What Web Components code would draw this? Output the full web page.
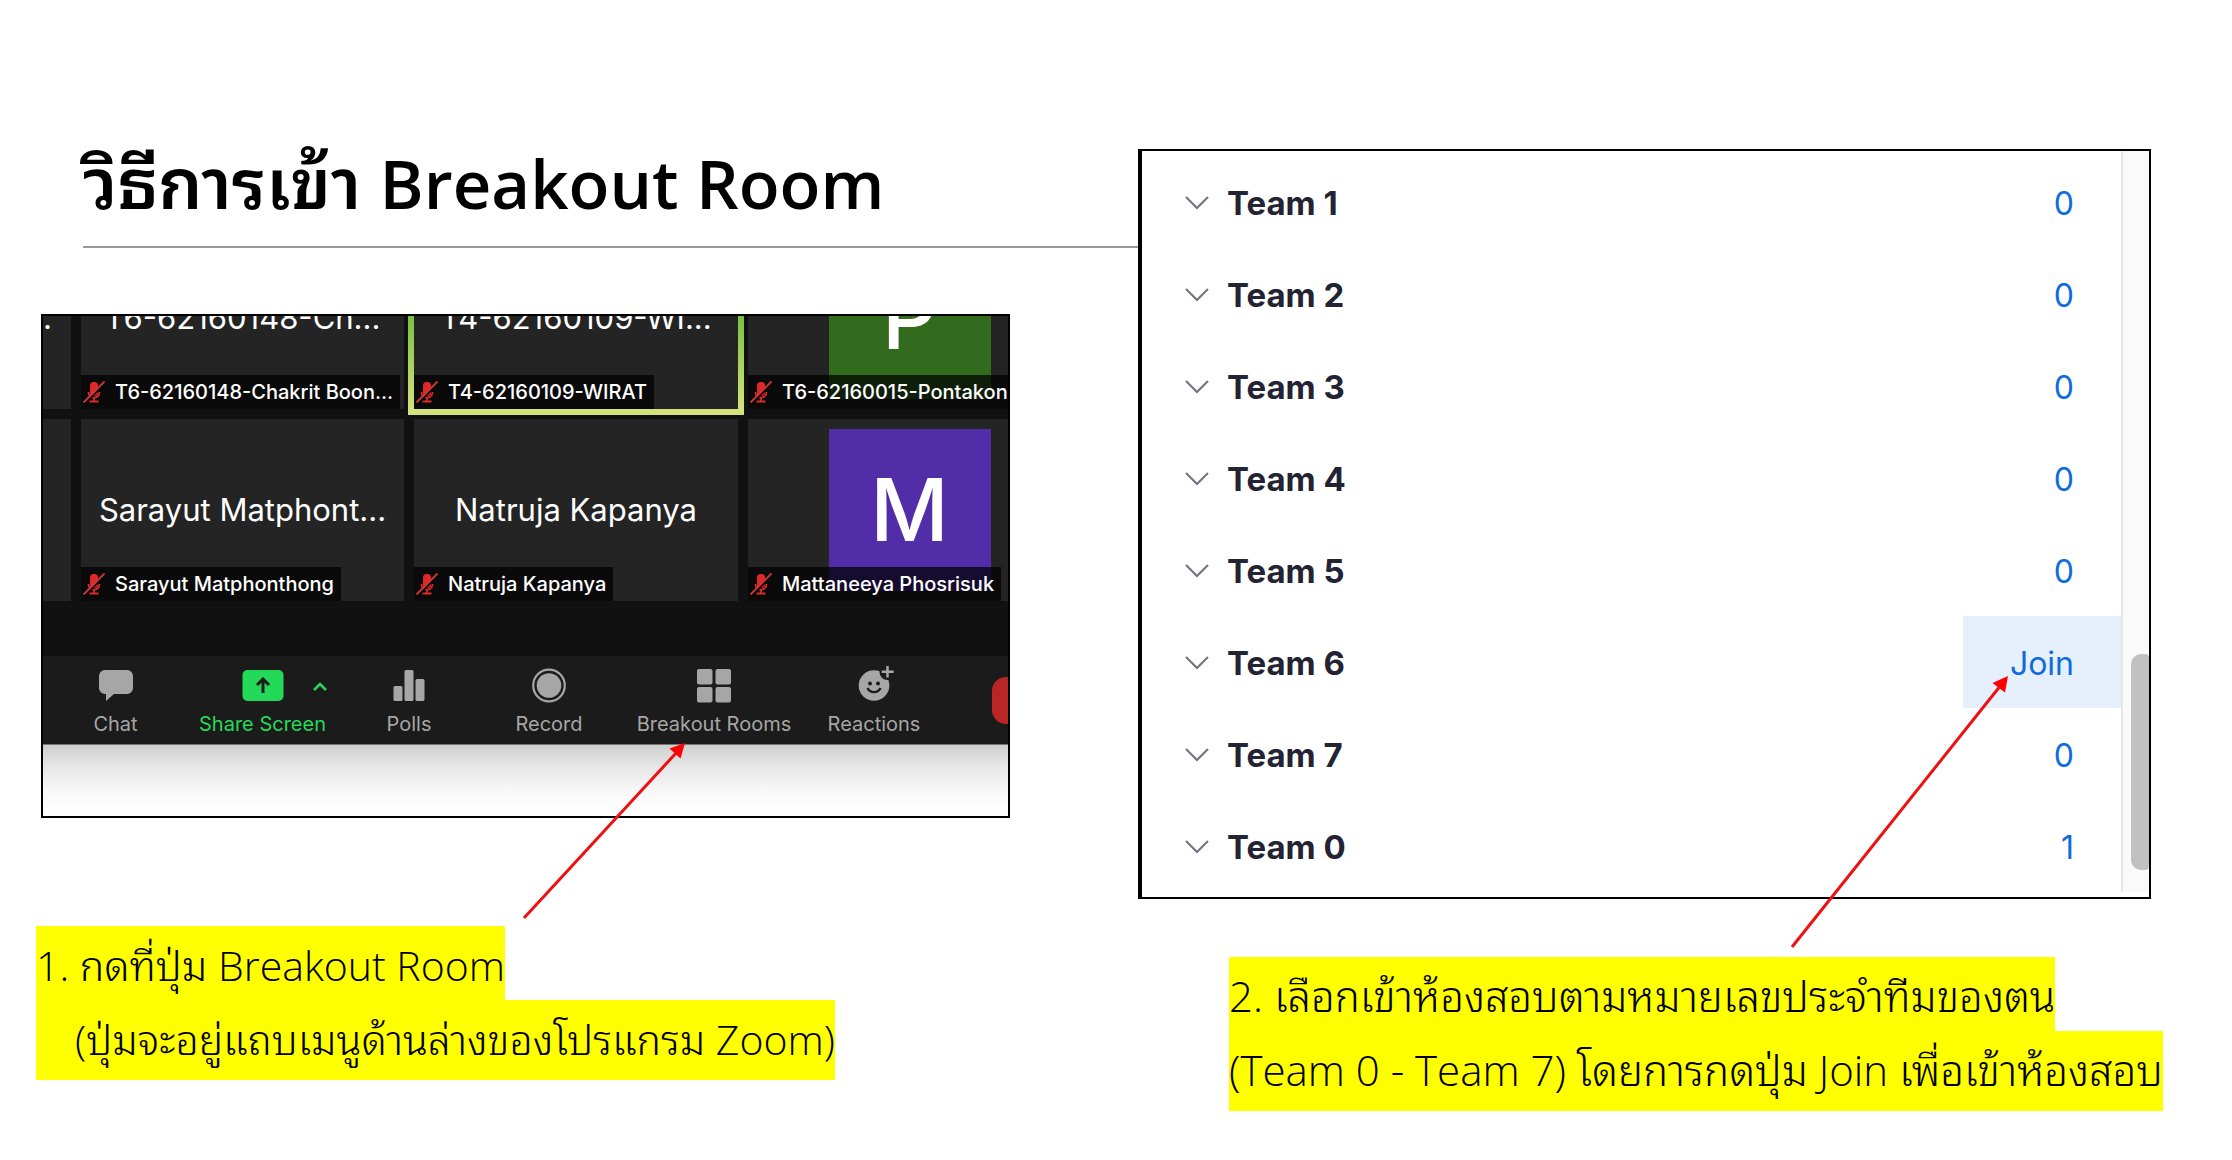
<!DOCTYPE html>
<html lang="th">
<head>
<meta charset="utf-8">
<title>วิธีการเข้า Breakout Room</title>
<style>
  body { margin: 0; background: #fff; color: #000; font-family: "Open Sans", "Noto Sans Thai Looped", "TH Sarabun New", Sarabun, Loma, Garuda, Waree, "Noto Sans Thai", "Noto Sans", sans-serif; }
</style>
</head>
<body>
<slide-page>
  <slide-title slot="left">วิธีการเข้า <latin-text>Breakout Room</latin-text></slide-title>
  <meeting-window slot="left"></meeting-window>
  <slide-note slot="left" compact>
    <note-line>1. กดที่ปุ่ม Breakout Room</note-line>
    <note-line indent last>(ปุ่มจะอยู่แถบเมนูด้านล่างของโปรแกรม Zoom)</note-line>
  </slide-note>
  <room-list slot="right">
    <room-row name="Team 1" count="0"></room-row>
    <room-row name="Team 2" count="0"></room-row>
    <room-row name="Team 3" count="0"></room-row>
    <room-row name="Team 4" count="0"></room-row>
    <room-row name="Team 5" count="0"></room-row>
    <room-row name="Team 6" count="Join" active></room-row>
    <room-row name="Team 7" count="0"></room-row>
    <room-row name="Team 0" count="1"></room-row>
  </room-list>
  <slide-note slot="right">
    <note-line>2. เลือกเข้าห้องสอบตามหมายเลขประจำทีมของตน</note-line>
    <note-line last>(Team 0 - Team 7) โดยการกดปุ่ม Join เพื่อเข้าห้องสอบ</note-line>
  </slide-note>
</slide-page>

<script>
const define = (name, html) => customElements.define(name, class extends HTMLElement {
  constructor() {
    super();
    this.attachShadow({ mode: 'open' });
  }
  connectedCallback() {
    if (this.shadowRoot.childNodes.length) return;
    this.shadowRoot.innerHTML = typeof html === 'function' ? html(this) : html;
  }
});

define('slide-page', `
  <style>
    :host { display: grid; grid-template-columns: 1138fr 1094fr; position: relative; min-height: 100vh; overflow: hidden; }
    .left { padding-top: 120px; min-width: 0; }
    .right { padding-top: 149px; min-width: 0; }
    svg { position: absolute; left: 0; top: 0; width: 100%; height: 1160px; pointer-events: none; }
    .left ::slotted(meeting-window) { margin: 66px 128px 108px 41px; }
    .left ::slotted(slide-note) { margin-left: 36px; }
    .right ::slotted(room-list) { margin: 0 81px 58px 0; }
    .right ::slotted(slide-note) { margin-left: 91px; }
  </style>
  <div class="left"><slot name="left"></slot></div>
  <div class="right"><slot name="right"></slot></div>
  <svg viewBox="0 0 2232 1160" preserveAspectRatio="none" aria-hidden="true">
    <g stroke="#ee1111" stroke-width="3" fill="#ff0000">
      <path d="M524 918L677 752M1792 947L2001 685"/>
      <path stroke="none" d="M685 743L669.500 748.500L680.500 758.500ZM2008 676L1992.500 683L2005 692.500Z"/>
    </g>
  </svg>`);

define('latin-text', `
  <style>:host { display: inline; font-size: var(--latin-size); }</style><slot></slot>`);

define('slide-title', `
  <style>
    :host { display: block; margin-left: 83px; border-bottom: 2px solid #999; --latin-size: 67px; }
    h1 { margin: 0; height: 126px; font-size: 70px; line-height: 124px; font-weight: 600; white-space: nowrap; }
  </style>
  <h1><slot></slot></h1>`);

define('slide-note', `
  <style>
    :host { display: block; font-size: 42px; font-weight: 350; }
    :host([compact]) { font-size: 41px; }
  </style>
  <slot></slot>`);

define('note-line', `
  <style>
    :host { display: block; width: fit-content; height: 74px; line-height: 78px; background: #ff0; white-space: nowrap; }
    :host([last]) { height: 80px; }
    :host([indent]) { padding-left: 39px; }
  </style>
  <slot></slot>`);

const mic = `<svg viewBox="0 0 22 22" width="22" height="22" aria-hidden="true">
  <rect x="7" y="1" width="8" height="14" rx="3.500" fill="#e02828"/>
  <path d="M5.500 11c0 7.500 11 7.500 11 0M11 16v4M6.500 20.500h9" fill="none" stroke="#e02828" stroke-width="1.800"/>
  <path d="M2 22.500L22.500 2" stroke="#0b0b0b" stroke-width="2"/>
  <path d="M0.500 21.500L21.500 0.500" stroke="#c93838" stroke-width="1.800"/></svg>`;

define('participant-tile', el => `
  <style>
    :host { display: flex; position: relative; align-items: center; justify-content: center; height: 182px; background: #242424; color: #fff; }
    :host([speaking])::after { content: ""; position: absolute; inset: -6px; border: 6px solid; border-image: linear-gradient(#35a51f, #74bd3e 45%, #d4e27c) 1; }
    .name { font-size: 31px; line-height: 40px; white-space: nowrap; }
    .avatar { width: 162px; height: 162px; display: flex; align-items: center; justify-content: center; background: var(--avatar); font-size: 86px; font-weight: 500; }
    .tag { position: absolute; left: 0; bottom: 0; height: 34px; box-sizing: border-box; max-width: 323px; padding: 0 7px 0 2px; display: flex; align-items: center; gap: 10px; background: rgba(0,0,0,.72); font-size: 20px; line-height: 24px; font-weight: 500; white-space: nowrap; }
    .tag svg { flex: none; overflow: visible; }
  </style>
  ${el.hasAttribute('letter') ? `<div class="avatar">${el.getAttribute('letter')}</div>` : `<div class="name">${el.getAttribute('name') || ''}</div>`}
  ${el.hasAttribute('label') ? `<div class="tag">${mic}<span>${el.getAttribute('label')}</span></div>` : ''}`);

define('tool-button', el => `
  <style>
    :host { display: flex; justify-content: center; color: #a6a6a6; }
    :host([share]) { color: #23d959; }
    button { all: unset; display: flex; flex-direction: column; align-items: center; gap: 10px; font-size: 20px; line-height: 24px; white-space: nowrap; }
    ::slotted(svg) { display: block; overflow: visible; }
  </style>
  <button type="button"><slot></slot><span>${el.getAttribute('label')}</span></button>`);

define('meeting-window', `
  <style>
    :host { display: block; border: 2px solid #000; background: #fff; font-family: Inter, sans-serif; overflow: hidden; }
    .gallery { height: 340px; box-sizing: border-box; padding-bottom: 55px; overflow: hidden; background: #111;
      display: grid; grid-template-columns: 28px 323px 324px 323px; grid-template-rows: 182px 182px; gap: 10px; align-content: end; }
    participant-tile[edge] { justify-content: flex-start; }
    .bar { height: 89px; display: grid; grid-template-columns: 145fr 149fr 144fr 136fr 194fr 126fr 71fr; background: #1b1b1b; padding-top: 12px; box-sizing: border-box; border-bottom: 1px solid #777; }
    .under { height: 71px; background: linear-gradient(#cfcfcf, #e6e6e6 30%, #f8f8f8 65%, #fff 95%); }
    .end { all: unset; width: 16px; height: 47px; margin-top: 9px; justify-self: end; border-radius: 14px 0 0 14px; background: #b92626; }
  </style>
  <div class="gallery">
    <participant-tile edge name="."></participant-tile>
    <participant-tile name="T6-62160148-Ch..." label="T6-62160148-Chakrit Boon..."></participant-tile>
    <participant-tile speaking name="T4-62160109-WI..." label="T4-62160109-WIRAT"></participant-tile>
    <participant-tile letter="P" style="--avatar:#336b1e" label="T6-62160015-Pontakon"></participant-tile>
    <participant-tile edge></participant-tile>
    <participant-tile name="Sarayut Matphont..." label="Sarayut Matphonthong"></participant-tile>
    <participant-tile name="Natruja Kapanya" label="Natruja Kapanya"></participant-tile>
    <participant-tile letter="M" style="--avatar:#512da8" label="Mattaneeya Phosrisuk"></participant-tile>
  </div>
  <div class="bar">
    <tool-button label="Chat"><svg width="34" height="34" viewBox="0 0 34 34" fill="#a6a6a6"><path d="M6 2h22a6 6 0 0 1 6 6v12a6 6 0 0 1-6 6H15l-8 7v-7H6a6 6 0 0 1-6-6V8a6 6 0 0 1 6-6z"/></svg></tool-button>
    <tool-button share label="Share Screen"><svg width="42" height="34" viewBox="0 0 42 34"><rect x="0.500" y="2" width="41" height="31" rx="5" fill="#23d959"/><path d="M21 25V12M15 17l6-6 6 6" fill="none" stroke="#1b1b1b" stroke-width="3"/><path d="M72 22l6-6 6 6" fill="none" stroke="#23d959" stroke-width="2.500"/></svg></tool-button>
    <tool-button label="Polls"><svg width="32" height="34" viewBox="0 0 32 34" fill="#a6a6a6"><rect x="0.500" y="18" width="9" height="15" rx="1.500"/><rect x="11.500" y="2" width="9" height="31" rx="1.500"/><rect x="22.500" y="11" width="9" height="22" rx="1.500"/></svg></tool-button>
    <tool-button label="Record"><svg width="34" height="34" viewBox="0 0 34 34"><circle cx="17" cy="17.500" r="15.800" fill="none" stroke="#a6a6a6" stroke-width="2.200"/><circle cx="17" cy="17.500" r="12.300" fill="#a6a6a6"/></svg></tool-button>
    <tool-button label="Breakout Rooms"><svg width="34" height="34" viewBox="0 0 34 34" fill="#a6a6a6"><rect y="1" width="15.500" height="15.500" rx="2"/><rect x="18.500" y="1" width="15.500" height="15.500" rx="2"/><rect y="19" width="15.500" height="15.500" rx="2"/><rect x="18.500" y="19" width="15.500" height="15.500" rx="2"/></svg></tool-button>
    <tool-button label="Reactions"><svg width="32" height="34" viewBox="0 0 32 34"><circle cx="16" cy="17.500" r="15.300" fill="#a6a6a6"/><circle cx="12" cy="15.500" r="2" fill="#1b1b1b"/><circle cx="20" cy="15.500" r="2" fill="#1b1b1b"/><path d="M9.500 20c2.500 5.500 10.500 5.500 13 0" fill="none" stroke="#1b1b1b" stroke-width="2.300"/><circle cx="29.500" cy="4" r="8" fill="#1b1b1b"/><path d="M29.500-2v11.500M23.700 3.700h12" stroke="#a6a6a6" stroke-width="2.500"/></svg></tool-button>
    <button class="end" type="button" aria-label="End"></button>
  </div>
  <div class="under"></div>`);

define('room-row', el => `
  <style>
    :host { display: flex; justify-content: space-between; height: 92px; font-size: 33px; }
    button { all: unset; display: flex; align-items: center; box-sizing: border-box; padding-top: 2px; white-space: nowrap; }
    .team { gap: 18px; padding-left: 43px; font-weight: 700; color: #232333; }
    .count { width: 158px; padding-right: 47px; justify-content: flex-end; font-size: 32px; color: #0e6bdc; }
    :host([active]) .count { background: #e6f0fc; }
  </style>
  <button type="button" class="team" aria-expanded="false"><svg width="24" height="14" viewBox="0 0 24 14" aria-hidden="true"><path d="M1 1l11 11L23 1" fill="none" stroke="#747487" stroke-width="2.200"/></svg>${el.getAttribute('name')}</button>
  <button type="button" class="count">${el.getAttribute('count')}</button>`);

define('room-list', `
  <style>
    :host { display: flex; height: 750px; box-sizing: border-box; border: 2px solid #000; border-left-width: 4px; padding-bottom: 5px; background: #fff; font-family: Inter, sans-serif; }
    .rows { flex: 1; padding-top: 5px; }
    .track { width: 28px; box-sizing: border-box; border-left: 2px solid #e6e6e6; background: #fafafa; display: flex; justify-content: flex-end; }
    .thumb { width: 18px; height: 216px; margin-top: 503px; border-radius: 10px 4px 4px 10px; background: #c1c1c1; }
  </style>
  <div class="rows"><slot></slot></div>
  <div class="track"><div class="thumb"></div></div>`);
</script>
</body>
</html>
